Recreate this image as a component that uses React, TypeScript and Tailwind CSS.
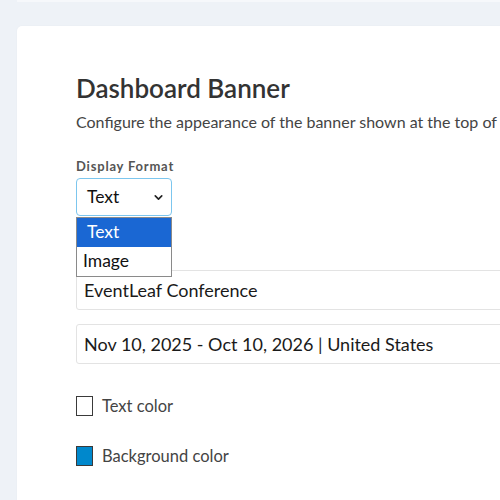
import { ChevronDown } from "lucide-react";

const font = { fontFamily: "Lato, 'Noto Sans', sans-serif" };

const Swatch = ({ color, label }: { color: string; label: string }) => (
    <div className="flex items-center gap-[9px]">
        <span className={`block w-[17px] h-[20px] border-[1.5px] border-[#3a3a3a] ${color}`} />
        <span className="text-[16.5px] leading-[20px] text-[#444]">{label}</span>
    </div>
);

const App = () => {
    return (
        <div className="w-[500px] h-[500px] overflow-hidden bg-[#eef2f7] relative" style={font}>
            <div className="ml-[17px] h-[2px] bg-[#f6f8fb]" />
            <div className="ml-[17px] mt-[24px] w-[700px] h-[600px] bg-white rounded-[5px] shadow-[0_0_2px_rgba(0,0,0,0.04)] pt-[45px] pl-[59px]">
                <h1 className="text-[26px] leading-[34px] font-semibold text-[#333]">Dashboard Banner</h1>
                <p className="mt-[6px] text-[16px] leading-[22px] text-[#444] whitespace-nowrap">
                    Configure the appearance of the banner shown at the top of the dashboard.
                </p>

                <label className="block mt-[25px] text-[13px] leading-[16px] font-bold tracking-[0.8px] text-[#555]">
                    Display Format
                </label>
                <div className="relative mt-[4px] w-[96px]">
                    <div className="h-[38px] border border-[#7cc6ee] rounded-[4px] flex items-center justify-between pl-[10px] pr-[6px] text-[17.5px] text-[#111]">
                        <span>Text</span>
                        <ChevronDown size={13} strokeWidth={3} className="text-[#222]" />
                    </div>
                    <ul className="absolute z-10 top-[39px] left-0 w-[96px] bg-white border border-[#8a8a8a] text-[17.5px]">
                        <li className="h-[29px] bg-[#1a67d3] text-white pl-[10px] flex items-center">Text</li>
                        <li className="h-[29px] text-[#111] pl-[6px] flex items-center">Image</li>
                    </ul>
                </div>

                <div className="mt-[54px] w-[640px] h-[40px] border border-[#e3e3e3] rounded-[3px] px-[7px] flex items-center text-[18px] text-[#1a1a1a]">
                    EventLeaf Conference
                </div>
                <div className="mt-[14px] w-[640px] h-[40px] border border-[#e3e3e3] rounded-[3px] px-[7px] flex items-center text-[18px] text-[#1a1a1a]">
                    Nov 10, 2025 - Oct 10, 2026 | United States
                </div>

                <div className="mt-[32px]">
                    <Swatch color="bg-white" label="Text color" />
                </div>
                <div className="mt-[30px]">
                    <Swatch color="bg-[#0088cc]" label="Background color" />
                </div>
            </div>
        </div>
    );
};

export default App;
